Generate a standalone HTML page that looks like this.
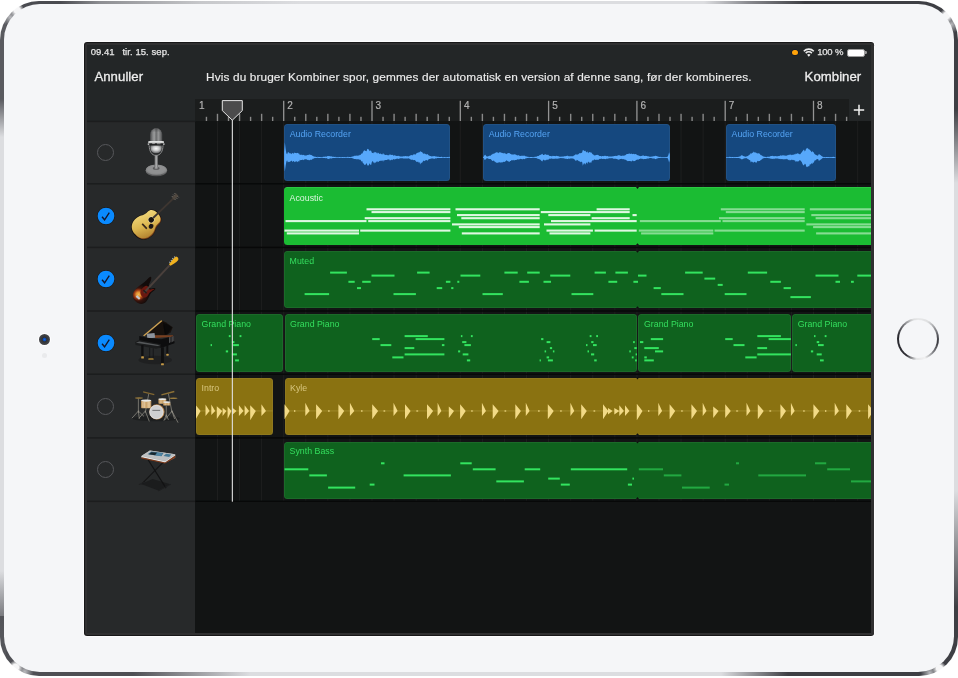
<!DOCTYPE html>
<html lang="da"><head><meta charset="utf-8"><title>GarageBand – Kombiner spor</title>
<style>
html,body{margin:0;padding:0;background:#fff;}
body{width:958px;height:678px;position:relative;overflow:hidden;font-family:"Liberation Sans",Arial,sans-serif;}
div,svg,span{position:absolute;box-sizing:border-box;}
.t{white-space:nowrap;line-height:1;}
.st{color:#e6e6e6;-webkit-text-stroke:0.25px #e6e6e6;}
.hd{color:#ededed;-webkit-text-stroke:0.3px #ededed;}
.lbl{font-size:8.8px;white-space:nowrap;line-height:1;}
.rg{border-radius:3.5px;box-shadow:inset 0 0 0 0.8px rgba(255,255,255,0.07);}
</style></head><body>

<div style="left:0.3px;top:0.7px;width:957.4px;height:675.8px;border-radius:39px;
background:
radial-gradient(ellipse 7px 7px at 17.2px 9.3px,#f6f6f7 0,#f6f6f7 45%,rgba(246,246,247,0) 100%),
radial-gradient(ellipse 7px 7px at 946.5px 14.6px,#f6f6f7 0,#f6f6f7 45%,rgba(246,246,247,0) 100%),
radial-gradient(ellipse 7px 7px at 15.6px 666.2px,#f6f6f7 0,#f6f6f7 45%,rgba(246,246,247,0) 100%),
radial-gradient(ellipse 7px 7px at 939.5px 667.4px,#f6f6f7 0,#f6f6f7 45%,rgba(246,246,247,0) 100%),
radial-gradient(ellipse 9px 9px at 10.2px 16.3px,rgba(205,206,209,0.85) 0,rgba(205,206,209,0) 100%),
radial-gradient(ellipse 9px 9px at 951.7px 23.3px,rgba(205,206,209,0.85) 0,rgba(205,206,209,0) 100%),
radial-gradient(ellipse 9px 9px at 24.7px 670.8px,rgba(205,206,209,0.85) 0,rgba(205,206,209,0) 100%),
radial-gradient(ellipse 9px 9px at 929.7px 671.8px,rgba(205,206,209,0.85) 0,rgba(205,206,209,0) 100%),
linear-gradient(to right,#4a4b50 0,#4a4b50 60px,#8d8e92 100px,#c6c7ca 200px,rgba(220,221,224,0) 300px,rgba(220,221,224,0) 704px,#8a8b90 748px,#3e3f44 805px,#3e3f44 100%) left top/100% 6px no-repeat,
linear-gradient(to right,#4e4f54 0,#4e4f54 133px,rgba(220,221,224,0) 250px,rgba(220,221,224,0) 721px,#3e3f44 788px,#3e3f44 100%) left bottom/100% 7px no-repeat,
linear-gradient(to bottom,#5a5b60 0,#5a5b60 98px,rgba(220,221,224,0) 136px,rgba(220,221,224,0) 570px,#55565b 632px,#55565b 100%) left top/6px 100% no-repeat,
linear-gradient(to bottom,#3e3f44 0,#3e3f44 108px,rgba(220,221,224,0) 182px,rgba(220,221,224,0) 490px,#3e3f44 606px,#3e3f44 100%) right top/7px 100% no-repeat,
radial-gradient(circle at 39px 39px,rgba(74,75,80,0) 0,rgba(74,75,80,0) 30px,#4a4b50 33px,#4a4b50 52px,rgba(74,75,80,0) 53px) left top/60px 60px no-repeat,
radial-gradient(circle at 21px 39px,rgba(62,63,68,0) 0,rgba(62,63,68,0) 30px,#3e3f44 33px,#3e3f44 52px,rgba(62,63,68,0) 53px) right top/60px 60px no-repeat,
radial-gradient(circle at 39px 21px,rgba(78,79,84,0) 0,rgba(78,79,84,0) 30px,#4e4f54 33px,#4e4f54 52px,rgba(78,79,84,0) 53px) left bottom/60px 60px no-repeat,
radial-gradient(circle at 21px 21px,rgba(62,63,68,0) 0,rgba(62,63,68,0) 30px,#3e3f44 33px,#3e3f44 52px,rgba(62,63,68,0) 53px) right bottom/60px 60px no-repeat,
#dcdde0;"></div>
<div style="left:4.3px;top:4.4px;width:949.9px;height:667.7px;border-radius:35.8px;background:#f5f6f8;"></div>
<div style="left:38px;top:332.7px;width:13px;height:13px;border-radius:50%;background:#fff;"></div>
<div style="left:39px;top:333.7px;width:11px;height:11px;border-radius:50%;background:radial-gradient(circle,#1268e0 0,#0a4ab8 1.3px,#303134 2.3px,#46474b 5.5px);"></div>
<div style="left:42px;top:352.6px;width:5px;height:5px;border-radius:50%;background:#e9eaec;"></div>
<div style="left:896.5px;top:317.8px;width:42.5px;height:42.5px;border-radius:50%;background:conic-gradient(from 0deg,#e8e9ea 0deg,#dedfe0 30deg,#55565c 80deg,#3a3a40 100deg,#7a7b80 130deg,#f0f0f1 160deg,#e4e5e6 185deg,#2e2e34 215deg,#2a2a30 280deg,#77787c 315deg,#dadbdc 345deg,#e8e9ea 360deg);"></div>
<div style="left:898.7px;top:320px;width:38.1px;height:38.1px;border-radius:50%;background:#f5f6f8;"></div>
<div style="left:82.6px;top:40.8px;width:792.8px;height:596.6px;border-radius:4px;background:#fcfcfd;"></div>
<div style="left:83.8px;top:42px;width:790.5px;height:594.3px;border-radius:3px;background:#171718;"></div>
<div style="left:84.8px;top:42.8px;width:789.3px;height:592.7px;border-radius:2.2px;background:#303031;"></div>
<div style="left:86.6px;top:45px;width:784.4px;height:588px;background:#232627;overflow:hidden;">
<div style="left:-86.6px;top:-45px;width:958px;height:678px;will-change:transform;">
<div style="left:86.6px;top:45px;width:784.4px;height:76px;background:#232627;"></div>
<div style="left:195.1px;top:99.3px;width:654.1px;height:21.7px;background:#1b1d1d;"></div>
<div style="left:195.2px;top:121px;width:675.8px;height:512px;background:#121414;"></div>
<div style="left:86.6px;top:121px;width:108.6px;height:512px;background:#27292a;"></div>
<svg width="958" height="678" style="left:0;top:0" viewBox="0 0 958 678"><g fill="#1e1f1f"><rect x="216.97" y="121" width="1" height="380.3"/><rect x="239.05" y="121" width="1" height="380.3"/><rect x="261.12" y="121" width="1" height="380.3"/><rect x="283.2" y="121" width="1" height="380.3"/><rect x="305.27" y="121" width="1" height="380.3"/><rect x="327.35" y="121" width="1" height="380.3"/><rect x="349.43" y="121" width="1" height="380.3"/><rect x="371.5" y="121" width="1" height="380.3"/><rect x="393.57" y="121" width="1" height="380.3"/><rect x="415.65" y="121" width="1" height="380.3"/><rect x="437.73" y="121" width="1" height="380.3"/><rect x="459.8" y="121" width="1" height="380.3"/><rect x="481.88" y="121" width="1" height="380.3"/><rect x="503.95" y="121" width="1" height="380.3"/><rect x="526.02" y="121" width="1" height="380.3"/><rect x="548.1" y="121" width="1" height="380.3"/><rect x="570.17" y="121" width="1" height="380.3"/><rect x="592.25" y="121" width="1" height="380.3"/><rect x="614.33" y="121" width="1" height="380.3"/><rect x="636.4" y="121" width="1" height="380.3"/><rect x="658.48" y="121" width="1" height="380.3"/><rect x="680.55" y="121" width="1" height="380.3"/><rect x="702.62" y="121" width="1" height="380.3"/><rect x="724.7" y="121" width="1" height="380.3"/><rect x="746.77" y="121" width="1" height="380.3"/><rect x="768.85" y="121" width="1" height="380.3"/><rect x="790.92" y="121" width="1" height="380.3"/><rect x="813" y="121" width="1" height="380.3"/><rect x="835.07" y="121" width="1" height="380.3"/><rect x="857.15" y="121" width="1" height="380.3"/></g>
<rect x="86.6" y="120.65" width="108.8" height="1.5" fill="#1c1d1e"/>
<rect x="86.6" y="183.05" width="108.8" height="1.5" fill="#1c1d1e"/>
<rect x="195.4" y="183.1" width="675.6" height="1.4" fill="#070808"/>
<rect x="86.6" y="246.65" width="108.8" height="1.5" fill="#1c1d1e"/>
<rect x="195.4" y="246.7" width="675.6" height="1.4" fill="#070808"/>
<rect x="86.6" y="310.25" width="108.8" height="1.5" fill="#1c1d1e"/>
<rect x="195.4" y="310.3" width="675.6" height="1.4" fill="#070808"/>
<rect x="86.6" y="373.45" width="108.8" height="1.5" fill="#1c1d1e"/>
<rect x="195.4" y="373.5" width="675.6" height="1.4" fill="#070808"/>
<rect x="86.6" y="437.15" width="108.8" height="1.5" fill="#1c1d1e"/>
<rect x="195.4" y="437.2" width="675.6" height="1.4" fill="#070808"/>
<rect x="86.6" y="500.55" width="108.8" height="1.5" fill="#1c1d1e"/>
<rect x="195.4" y="500.6" width="675.6" height="1.4" fill="#070808"/>
</svg>
<span class="t st" style="left:90.7px;top:47.4px;font-size:9.5px;letter-spacing:0px;">09.41</span>
<span class="t st" style="left:122.4px;top:47.4px;font-size:9.5px;letter-spacing:0.07px;">tir. 15. sep.</span>
<span class="t st" style="left:817.2px;top:47.4px;font-size:9.5px;letter-spacing:-0.19px;">100 %</span>
<div style="left:792.2px;top:49.6px;width:5.6px;height:5.6px;border-radius:50%;background:#ffa30a;box-shadow:0 0 0 0.6px #101428;"></div>
<svg style="left:803px;top:47.8px" width="11.6" height="9" viewBox="0 0 23.2 18"><g fill="none" stroke="#ededed" stroke-linecap="butt">
<path d="M1.6 6.4 A14.2 14.2 0 0 1 21.6 6.4" stroke-width="3.2"/>
<path d="M5.4 10.3 A8.8 8.8 0 0 1 17.8 10.3" stroke-width="3"/></g>
<path d="M11.6 17.4 L8.2 13.6 A5 5 0 0 1 15 13.6 Z" fill="#ededed"/></svg>
<div style="left:846.8px;top:48.8px;width:18px;height:8.2px;border-radius:2.2px;background:#fff;border:0.8px solid #9b9b9b;"></div>
<div style="left:865px;top:51.4px;width:1.6px;height:3px;border-radius:0 1.2px 1.2px 0;background:#9a9a9a;"></div>
<span class="t hd" style="left:94.4px;top:70.2px;font-size:13.2px;letter-spacing:0.05px;">Annuller</span>
<span class="t hd" id="msg" style="left:206.1px;top:71.5px;font-size:11.8px;letter-spacing:0.128px;-webkit-text-stroke:0.15px #ebebeb;">Hvis du bruger Kombiner spor, gemmes der automatisk en version af denne sang, før der kombineres.</span>
<span class="t hd" style="left:804.6px;top:70.1px;font-size:13.2px;letter-spacing:0.03px;">Kombiner</span>
<svg width="958" height="678" style="left:0;top:0" viewBox="0 0 958 678"><rect x="205.74" y="116.8" width="1.4" height="4.2" fill="#888888"/><rect x="216.78" y="113.8" width="1.4" height="7.2" fill="#888888"/><rect x="227.81" y="116.8" width="1.4" height="4.2" fill="#888888"/><rect x="238.85" y="113.8" width="1.4" height="7.2" fill="#888888"/><rect x="249.89" y="116.8" width="1.4" height="4.2" fill="#888888"/><rect x="260.93" y="113.8" width="1.4" height="7.2" fill="#888888"/><rect x="271.96" y="116.8" width="1.4" height="4.2" fill="#888888"/><rect x="283.05" y="100.8" width="1.3" height="20.2" fill="#949494"/><rect x="294.04" y="116.8" width="1.4" height="4.2" fill="#888888"/><rect x="305.07" y="113.8" width="1.4" height="7.2" fill="#888888"/><rect x="316.11" y="116.8" width="1.4" height="4.2" fill="#888888"/><rect x="327.15" y="113.8" width="1.4" height="7.2" fill="#888888"/><rect x="338.19" y="116.8" width="1.4" height="4.2" fill="#888888"/><rect x="349.22" y="113.8" width="1.4" height="7.2" fill="#888888"/><rect x="360.26" y="116.8" width="1.4" height="4.2" fill="#888888"/><rect x="371.35" y="100.8" width="1.3" height="20.2" fill="#949494"/><rect x="382.34" y="116.8" width="1.4" height="4.2" fill="#888888"/><rect x="393.38" y="113.8" width="1.4" height="7.2" fill="#888888"/><rect x="404.41" y="116.8" width="1.4" height="4.2" fill="#888888"/><rect x="415.45" y="113.8" width="1.4" height="7.2" fill="#888888"/><rect x="426.49" y="116.8" width="1.4" height="4.2" fill="#888888"/><rect x="437.53" y="113.8" width="1.4" height="7.2" fill="#888888"/><rect x="448.56" y="116.8" width="1.4" height="4.2" fill="#888888"/><rect x="459.65" y="100.8" width="1.3" height="20.2" fill="#949494"/><rect x="470.64" y="116.8" width="1.4" height="4.2" fill="#888888"/><rect x="481.67" y="113.8" width="1.4" height="7.2" fill="#888888"/><rect x="492.71" y="116.8" width="1.4" height="4.2" fill="#888888"/><rect x="503.75" y="113.8" width="1.4" height="7.2" fill="#888888"/><rect x="514.79" y="116.8" width="1.4" height="4.2" fill="#888888"/><rect x="525.82" y="113.8" width="1.4" height="7.2" fill="#888888"/><rect x="536.86" y="116.8" width="1.4" height="4.2" fill="#888888"/><rect x="547.95" y="100.8" width="1.3" height="20.2" fill="#949494"/><rect x="558.94" y="116.8" width="1.4" height="4.2" fill="#888888"/><rect x="569.98" y="113.8" width="1.4" height="7.2" fill="#888888"/><rect x="581.01" y="116.8" width="1.4" height="4.2" fill="#888888"/><rect x="592.05" y="113.8" width="1.4" height="7.2" fill="#888888"/><rect x="603.09" y="116.8" width="1.4" height="4.2" fill="#888888"/><rect x="614.12" y="113.8" width="1.4" height="7.2" fill="#888888"/><rect x="625.16" y="116.8" width="1.4" height="4.2" fill="#888888"/><rect x="636.25" y="100.8" width="1.3" height="20.2" fill="#949494"/><rect x="647.24" y="116.8" width="1.4" height="4.2" fill="#888888"/><rect x="658.27" y="113.8" width="1.4" height="7.2" fill="#888888"/><rect x="669.31" y="116.8" width="1.4" height="4.2" fill="#888888"/><rect x="680.35" y="113.8" width="1.4" height="7.2" fill="#888888"/><rect x="691.39" y="116.8" width="1.4" height="4.2" fill="#888888"/><rect x="702.42" y="113.8" width="1.4" height="7.2" fill="#888888"/><rect x="713.46" y="116.8" width="1.4" height="4.2" fill="#888888"/><rect x="724.55" y="100.8" width="1.3" height="20.2" fill="#949494"/><rect x="735.54" y="116.8" width="1.4" height="4.2" fill="#888888"/><rect x="746.57" y="113.8" width="1.4" height="7.2" fill="#888888"/><rect x="757.61" y="116.8" width="1.4" height="4.2" fill="#888888"/><rect x="768.65" y="113.8" width="1.4" height="7.2" fill="#888888"/><rect x="779.69" y="116.8" width="1.4" height="4.2" fill="#888888"/><rect x="790.72" y="113.8" width="1.4" height="7.2" fill="#888888"/><rect x="801.76" y="116.8" width="1.4" height="4.2" fill="#888888"/><rect x="812.85" y="100.8" width="1.3" height="20.2" fill="#949494"/><rect x="823.84" y="116.8" width="1.4" height="4.2" fill="#888888"/><rect x="834.88" y="113.8" width="1.4" height="7.2" fill="#888888"/><rect x="845.91" y="116.8" width="1.4" height="4.2" fill="#888888"/></svg>
<span class="t" style="left:199px;top:101.1px;font-size:10px;color:#b2b2b2;-webkit-text-stroke:0.2px #b2b2b2;">1</span>
<span class="t" style="left:287.3px;top:101.1px;font-size:10px;color:#b2b2b2;-webkit-text-stroke:0.2px #b2b2b2;">2</span>
<span class="t" style="left:375.6px;top:101.1px;font-size:10px;color:#b2b2b2;-webkit-text-stroke:0.2px #b2b2b2;">3</span>
<span class="t" style="left:463.9px;top:101.1px;font-size:10px;color:#b2b2b2;-webkit-text-stroke:0.2px #b2b2b2;">4</span>
<span class="t" style="left:552.2px;top:101.1px;font-size:10px;color:#b2b2b2;-webkit-text-stroke:0.2px #b2b2b2;">5</span>
<span class="t" style="left:640.5px;top:101.1px;font-size:10px;color:#b2b2b2;-webkit-text-stroke:0.2px #b2b2b2;">6</span>
<span class="t" style="left:728.8px;top:101.1px;font-size:10px;color:#b2b2b2;-webkit-text-stroke:0.2px #b2b2b2;">7</span>
<span class="t" style="left:817.1px;top:101.1px;font-size:10px;color:#b2b2b2;-webkit-text-stroke:0.2px #b2b2b2;">8</span>
<div style="left:849.2px;top:99.3px;width:21.8px;height:21.7px;background:#232627;"></div>
<svg style="left:853.2px;top:103.5px" width="12" height="12" viewBox="0 0 12 12"><path d="M6 0.8V11.2M0.8 6H11.2" stroke="#f2f2f2" stroke-width="1.5" fill="none"/></svg>
<div style="left:97.2px;top:143.8px;width:17px;height:17px;border-radius:50%;border:1.1px solid #56575a;"></div>
<svg style="left:126px;top:122px" width="60" height="60" viewBox="0 0 678 678">
<defs>
<linearGradient id="mcap" x1="0" x2="1" y1="0" y2="0"><stop offset="0" stop-color="#454648"/><stop offset="0.18" stop-color="#7b7c7d"/><stop offset="0.34" stop-color="#9c9d9e"/><stop offset="0.5" stop-color="#6a6b6c"/><stop offset="0.68" stop-color="#949596"/><stop offset="0.86" stop-color="#6e6f70"/><stop offset="1" stop-color="#434446"/></linearGradient>
<linearGradient id="mcapv" x1="0" x2="0" y1="0" y2="1"><stop offset="0" stop-color="#3a3b3d" stop-opacity="0.55"/><stop offset="0.3" stop-color="#3a3b3d" stop-opacity="0"/><stop offset="1" stop-color="#3a3b3d" stop-opacity="0"/></linearGradient>
<linearGradient id="mbase" x1="0" x2="0" y1="0" y2="1"><stop offset="0" stop-color="#8e8f90"/><stop offset="0.55" stop-color="#7a7b7c"/><stop offset="1" stop-color="#505152"/></linearGradient>
<radialGradient id="mlow" cx="0.5" cy="0.42" r="0.62"><stop offset="0" stop-color="#fafafa"/><stop offset="0.45" stop-color="#c9cacb"/><stop offset="1" stop-color="#58595b"/></radialGradient>
<linearGradient id="mstem" x1="0" x2="1"><stop offset="0" stop-color="#5c5d5e"/><stop offset="0.5" stop-color="#b4b5b6"/><stop offset="1" stop-color="#6c6d6e"/></linearGradient>
</defs>
<ellipse cx="343" cy="548" rx="122" ry="66" fill="url(#mbase)"/>
<ellipse cx="343" cy="538" rx="116" ry="58" fill="#8a8b8c"/>
<ellipse cx="343" cy="535" rx="100" ry="46" fill="#909192"/>
<ellipse cx="341" cy="522" rx="38" ry="17" fill="#595a5b"/>
<rect x="322" y="372" width="38" height="150" fill="url(#mstem)"/>
<ellipse cx="341" cy="520" rx="19" ry="8" fill="#9d9e9f"/>
<path d="M262 262 C262 330 290 378 340 378 C390 378 418 330 418 262" fill="none" stroke="#8c8d8e" stroke-width="11"/>
<path d="M272 225 V141 A69 69 0 0 1 410 141 V225 Z" fill="url(#mcap)"/>
<path d="M272 225 V141 A69 69 0 0 1 410 141 V225 Z" fill="url(#mcapv)"/>
<path d="M276 262 H404 V290 Q404 352 340 352 Q276 352 276 290Z" fill="url(#mlow)"/>
<rect x="262" y="238" width="156" height="26" fill="#1d1e1f"/>
<path d="M296 244 h30 M350 246 h40" stroke="#d8d8d8" stroke-width="7"/>
<rect x="250" y="216" width="180" height="24" rx="12" fill="#cfd0d0"/>
<rect x="270" y="219" width="140" height="8" rx="4" fill="#f1f1f1"/>
<circle cx="254" cy="250" r="10" fill="#bdbebf"/><circle cx="428" cy="250" r="10" fill="#bdbebf"/>
</svg>
<svg style="left:95.7px;top:205.7px" width="20" height="20" viewBox="-10 -10 20 20"><circle cx="0" cy="0" r="9" fill="#1b1817"/><circle cx="0" cy="0" r="8.35" fill="#0a8aff"/><path d="M-4 0.7 L-1.4 3.8 L3.3 -3.3" stroke="#14152a" stroke-width="1.35" fill="none" stroke-linejoin="miter"/></svg>
<svg style="left:126px;top:186px" width="60" height="60" viewBox="0 0 678 678">
<defs><linearGradient id="gbody" x1="0" x2="1" y1="0.2" y2="0.8"><stop offset="0" stop-color="#f3db7f"/><stop offset="0.55" stop-color="#dcb750"/><stop offset="1" stop-color="#b07f2e"/></linearGradient></defs>
<g transform="translate(285 382) rotate(46) scale(11.3)">
<rect x="-0.95" y="-30.5" width="1.9" height="28" fill="#3e3631"/>
<path d="M-1.9 -36.2 L1.9 -36.2 L1.5 -30.2 L-1.5 -30.2Z" fill="#4f473f"/>
<path d="M-2.8 -35.3h1M-2.8 -33.3h1M-2.8 -31.3h1M1.8 -35.3h1M1.8 -33.3h1M1.8 -31.3h1" stroke="#8e887e" stroke-width="0.9"/>
<path d="M0 -9.9 C5.7 -9.9 8.6 -7 8.6 -3.2 C8.6 -0.6 8.6 0.6 9.7 2.9 C14.2 9 13.2 22.7 0 22.7 C-13.2 22.7 -14.2 9 -9.7 2.9 C-8.6 0.6 -8.6 -0.6 -8.6 -3.2 C-8.6 -7 -5.7 -9.9 0 -9.9Z" fill="#16120f"/>
<path d="M1 -9 C6.2 -9 8.5 -6.6 8.5 -3 C8.5 -0.5 8.5 0.8 9.6 3.1 C13.7 9 12.8 21.6 0.8 21.8 C-2 18 12 6 1 -9Z" fill="#7e451c"/>
<path d="M-0.4 -9.2 C4.8 -9.2 7.5 -6.6 7.5 -3.1 C7.5 -0.6 7.5 0.7 8.6 3 C12.8 9 11.8 21.6 -0.4 21.6 C-12.6 21.6 -13.6 9 -9.4 3 C-8.3 0.7 -8.3 -0.6 -8.3 -3.1 C-8.3 -6.6 -5.6 -9.2 -0.4 -9.2Z" fill="url(#gbody)"/>
<circle cx="0" cy="0" r="3.3" fill="#e6d69e"/>
<circle cx="0" cy="0" r="2.7" fill="#17130f"/>
<path d="M4.7 1.8 C7.1 2.8 7.6 6 5.4 7.2 C3.2 7.8 1.6 5.2 2.7 3Z" fill="#1c1714"/>
<rect x="-3.4" y="8.5" width="6.8" height="1.7" rx="0.5" fill="#37281b"/>
<rect x="-0.95" y="-10" width="1.9" height="7.4" fill="#3e3631"/>
</g></svg>
<svg style="left:95.7px;top:269.3px" width="20" height="20" viewBox="-10 -10 20 20"><circle cx="0" cy="0" r="9" fill="#1b1817"/><circle cx="0" cy="0" r="8.35" fill="#0a8aff"/><path d="M-4 0.7 L-1.4 3.8 L3.3 -3.3" stroke="#14152a" stroke-width="1.35" fill="none" stroke-linejoin="miter"/></svg>
<svg style="left:126px;top:250px" width="60" height="60" viewBox="0 0 678 678">
<defs>
<radialGradient id="bsun" gradientUnits="userSpaceOnUse" cx="-2.8" cy="5.6" r="10.5"><stop offset="0" stop-color="#f2b956"/><stop offset="0.22" stop-color="#e08f30"/><stop offset="0.42" stop-color="#9a3715"/><stop offset="0.62" stop-color="#36130d"/><stop offset="1" stop-color="#120b0a"/></radialGradient>
</defs>
<g transform="translate(208 478) rotate(43) scale(11.3)">
<rect x="-0.95" y="-37.5" width="1.9" height="33" fill="#4a403c"/>
<path d="M-1.4 -47.8 C0.2 -49 2.6 -48.2 2.8 -46 C2.9 -43.4 1.9 -40.4 1.1 -37.2 L-1.1 -37.2 C-1.5 -40.6 -2.3 -45.2 -1.4 -47.8Z" fill="#f0b11f"/>
<path d="M-2.7 -46.4h1.2M-2.8 -44h1.2M-2.7 -41.6h1.2M-2.5 -39.3h1.2" stroke="#b4c2cf" stroke-width="1"/>
<path d="M-2.1 -8.6 C-2.6 -12 -4.2 -15.4 -5.6 -15.8 C-7.2 -15.4 -6.4 -11.6 -7 -7.6 C-7.6 -3.4 -9.2 1.2 -8.4 6 C-7.6 10.8 -3.6 12.9 0.4 12.7 C4.8 12.5 8 9.4 7.6 5 C7.2 1.4 5.6 -1.4 5.4 -4 C5.3 -6.2 6.4 -8.6 5.8 -10 C5 -10.9 3.2 -9.6 2.2 -6.8 Z" fill="url(#bsun)"/>
<path d="M-1.7 -6.6 C-2.9 -7 -3.8 -5.6 -4 -3.4 C-4.2 -0.8 -4 1.6 -2.8 3 C-1.4 4.6 1.8 5.2 3.8 3.8 C5.2 2.6 4.9 0.4 4.3 -2 C3.9 -4 5 -8.4 5.4 -9.2 C4.3 -8.8 3 -7.4 2.2 -5.4Z" fill="#6a1810"/>
<rect x="-0.95" y="-9.4" width="1.9" height="10" fill="#4a403c"/>
<rect x="-2.3" y="-1.6" width="4.6" height="1.5" fill="#241d1b"/>
<rect x="-3.4" y="7" width="4.6" height="2.2" rx="0.4" fill="#c3c7cc"/>
</g></svg>
<svg style="left:95.7px;top:332.7px" width="20" height="20" viewBox="-10 -10 20 20"><circle cx="0" cy="0" r="9" fill="#1b1817"/><circle cx="0" cy="0" r="8.35" fill="#0a8aff"/><path d="M-4 0.7 L-1.4 3.8 L3.3 -3.3" stroke="#14152a" stroke-width="1.35" fill="none" stroke-linejoin="miter"/></svg>
<svg style="left:126px;top:314px" width="60" height="60" viewBox="0 0 678 678">
<ellipse cx="330" cy="520" rx="190" ry="48" fill="#1a1b1c" opacity="0.6"/>
<path d="M405 74 L448 92 L528 150 L505 205 L462 236 L240 238 Z" fill="#17110d"/>
<path d="M418 100 L470 120 L520 152 L470 222 L440 232Z" fill="#0b0a0a"/>
<path d="M193 242 L398 72 L412 80 L206 252 Z" fill="#cfa252"/>
<path d="M428 128 L446 232" stroke="#060606" stroke-width="7"/>
<path d="M326 240 L532 240 L532 258 L326 270Z" fill="#7a3f1f"/>
<path d="M236 222 L322 216 L330 268 L240 276Z" fill="#8c939c"/>
<path d="M150 250 L240 268 L396 284 L548 250 L548 330 L420 376 L392 380 L150 320 Z" fill="#0d0d0e"/>
<path d="M492 262v64M508 258v62M524 254v60M540 250v58" stroke="#6a6b6d" stroke-width="8"/>
<path d="M104 316 L150 294 L394 342 L388 382 L340 392 L108 350Z" fill="#1b1c1d"/>
<path d="M112 324 L150 312 L386 352 L356 362Z" fill="#7d8083" opacity="0.6"/>
<rect x="172" y="352" width="26" height="140" fill="#0f0f10"/>
<rect x="396" y="376" width="32" height="196" fill="#0f0f10"/>
<rect x="456" y="352" width="22" height="110" fill="#0f0f10"/>
<path d="M268 380 v128 h40 v-120" stroke="#131314" stroke-width="9" fill="none"/>
<rect x="172" y="478" width="30" height="24" rx="6" fill="#c59a47"/>
<rect x="396" y="556" width="32" height="24" rx="6" fill="#c59a47"/>
<rect x="456" y="450" width="26" height="22" rx="6" fill="#c59a47"/>
<rect x="252" y="500" width="60" height="18" rx="5" fill="#a68236"/>
</svg>
<div style="left:97.2px;top:397.65px;width:17px;height:17px;border-radius:50%;border:1.1px solid #56575a;"></div>
<svg style="left:126px;top:377px" width="60" height="60" viewBox="0 0 678 678">
<defs><linearGradient id="dwood" x1="0" x2="1"><stop offset="0" stop-color="#b48a54"/><stop offset="0.3" stop-color="#dcba88"/><stop offset="0.55" stop-color="#c9a26a"/><stop offset="0.8" stop-color="#dfbe8c"/><stop offset="1" stop-color="#a47a46"/></linearGradient></defs>
<ellipse cx="340" cy="470" rx="270" ry="30" fill="#161718" opacity="0.55"/>
<g stroke="#9d9a8f" stroke-width="7.5" fill="none" stroke-linecap="round">
<path d="M140 246 V400 M140 385 L70 462 M140 385 L200 442 M140 385 L150 470"/>
<path d="M256 196 L218 400 M218 385 L150 462 M218 385 L262 498"/>
<path d="M480 192 L520 400 M520 385 L440 482 M520 385 L586 512 M520 385 L548 470"/>
<path d="M455 330 V450 M455 430 L430 490 M455 430 L478 480"/>
</g>
<path d="M194 160 L322 192 L318 206 L192 176Z" fill="#806631"/>
<path d="M398 194 L544 156 L548 172 L402 208Z" fill="#8c7136"/>
<ellipse cx="146" cy="238" rx="46" ry="9" fill="#97793c"/>
<ellipse cx="536" cy="240" rx="46" ry="9" fill="#987b3e"/>
<rect x="170" y="266" width="116" height="88" rx="8" fill="url(#dwood)"/>
<ellipse cx="228" cy="266" rx="58" ry="13" fill="#e9e9e6"/>
<path d="M186 282v62M206 284v64M250 284v64M270 282v62" stroke="#f2e6cc" stroke-width="5" opacity="0.8"/>
<rect x="366" y="250" width="90" height="52" rx="8" fill="url(#dwood)"/>
<ellipse cx="411" cy="250" rx="45" ry="11" fill="#ecece9"/>
<rect x="420" y="284" width="80" height="38" rx="6" fill="url(#dwood)"/>
<ellipse cx="460" cy="284" rx="40" ry="9" fill="#e4e4e1"/>
<circle cx="350" cy="394" r="86" fill="#b48248"/>
<circle cx="344" cy="396" r="79" fill="#cfd0d1"/>
<circle cx="344" cy="396" r="76" fill="none" stroke="#eeeeef" stroke-width="6"/>
<path d="M298 377 h88" stroke="#4a4a4b" stroke-width="8"/>
</svg>
<div style="left:97.2px;top:461.2px;width:17px;height:17px;border-radius:50%;border:1.1px solid #56575a;"></div>
<svg style="left:126px;top:441px" width="60" height="60" viewBox="0 0 678 678">
<path d="M172 486 L300 428 L502 490 L372 562Z" fill="#1b1c1d"/>
<path d="M250 212 L452 532" stroke="#121213" stroke-width="13"/>
<path d="M424 236 L176 486" stroke="#141415" stroke-width="12"/>
<path d="M150 492 L200 470 M368 562 L502 490" stroke="#1f2021" stroke-width="12" stroke-linecap="round"/>
<path d="M175 170 L270 108 L556 150 L556 188 L440 250 L175 190Z" fill="#9fa3a6"/>
<path d="M175 168 L270 108 L556 150 L442 226Z" fill="#bcbfc1"/>
<path d="M244 150 L286 118 L424 136 L400 172Z" fill="#3b6d8b"/>
<path d="M258 150 L288 126 L352 134 L330 160Z" fill="#16262e"/>
<path d="M330 160 L352 134 L414 142 L396 170Z" fill="#4f86a5"/>
<path d="M424 170 L452 144 L512 152 L488 182Z" fill="#457894"/>
<path d="M175 170 L442 228 L556 152 L556 164 L442 242 L175 184Z" fill="#e2e3e3"/>
<path d="M175 184 L442 242 L556 164 L556 190 L440 254 L175 198Z" fill="#7c3818"/>
</svg>
<div class="rg" style="left:284.1px;top:123.8px;width:166px;height:57px;background:#15487f;"></div>
<span class="lbl" style="left:289.7px;top:129.75px;color:#55a4f4;">Audio Recorder</span>
<div class="rg" style="left:483.1px;top:123.8px;width:187.1px;height:57px;background:#15487f;"></div>
<span class="lbl" style="left:488.7px;top:129.75px;color:#55a4f4;">Audio Recorder</span>
<div class="rg" style="left:726px;top:123.8px;width:109.5px;height:57px;background:#15487f;"></div>
<span class="lbl" style="left:731.6px;top:129.75px;color:#55a4f4;">Audio Recorder</span>
<div class="rg" style="left:284px;top:187.3px;width:589px;height:57.6px;background:#1bbc33;border-radius:3.5px 0 0 3.5px;box-shadow:inset 0 0.8px 0 0 rgba(120,255,140,0.25);"></div>
<span class="lbl" style="left:289.6px;top:193.8px;color:#dcf6df;">Acoustic</span>
<div class="rg" style="left:284px;top:251.1px;width:589px;height:56.8px;background:#0f621e;border-radius:3.5px 0 0 3.5px;"></div>
<span class="lbl" style="left:289.6px;top:257.2px;color:#34df5e;">Muted</span>
<div class="rg" style="left:196px;top:314.4px;width:87.2px;height:57.4px;background:#0f621e;"></div>
<span class="lbl" style="left:201.6px;top:320.2px;color:#34df5e;">Grand Piano</span>
<div class="rg" style="left:284.5px;top:314.4px;width:352.8px;height:57.4px;background:#0f621e;"></div>
<span class="lbl" style="left:290.1px;top:320.2px;color:#34df5e;">Grand Piano</span>
<div class="rg" style="left:638.4px;top:314.4px;width:152.5px;height:57.4px;background:#0f621e;"></div>
<span class="lbl" style="left:644px;top:320.2px;color:#34df5e;">Grand Piano</span>
<div class="rg" style="left:792.1px;top:314.4px;width:80.9px;height:57.4px;background:#0f621e;border-radius:3.5px 0 0 3.5px;"></div>
<span class="lbl" style="left:797.7px;top:320.2px;color:#34df5e;">Grand Piano</span>
<div class="rg" style="left:196px;top:377.8px;width:76.7px;height:57px;background:#8a7211;"></div>
<span class="lbl" style="left:201.6px;top:384.4px;color:#d8c67e;">Intro</span>
<div class="rg" style="left:284.5px;top:377.8px;width:588.5px;height:57px;background:#8a7211;border-radius:3.5px 0 0 3.5px;"></div>
<span class="lbl" style="left:290.1px;top:384.4px;color:#d8c67e;">Kyle</span>
<div class="rg" style="left:284px;top:441.9px;width:589px;height:56.8px;background:#0f621e;border-radius:3.5px 0 0 3.5px;"></div>
<span class="lbl" style="left:289.6px;top:447.3px;color:#34df5e;">Synth Bass</span>
<svg width="958" height="678" style="left:0;top:0" viewBox="0 0 958 678"><defs><clipPath id="cc"><rect x="0" y="0" width="871" height="678"/></clipPath></defs><g clip-path="url(#cc)">
<path fill="#57a8fb" d="M284.1 151.9 L284.85 142.32 L285.6 148.69 L286.35 153.37 L287.1 154.13 L287.85 152.21 L288.6 152.14 L289.35 153.02 L290.1 153.8 L290.85 153.04 L291.6 154.34 L292.35 152.64 L293.1 153.47 L293.85 153.51 L294.6 152.51 L295.35 152.89 L296.1 153.05 L296.85 153.21 L297.6 152.7 L298.35 153.54 L299.1 153.58 L299.85 155.02 L300.6 154.66 L301.35 154.64 L302.1 154.83 L302.85 155.34 L303.6 154.86 L304.35 155.25 L305.1 155.71 L305.85 155.13 L306.6 155.62 L307.35 155.04 L308.1 155.1 L308.85 154.72 L309.6 154.56 L310.35 154.65 L311.1 155.37 L311.85 154.95 L312.6 155.9 L313.35 156.26 L314.1 156.49 L314.85 156.68 L315.6 156.87 L316.35 156.91 L317.1 156.98 L317.85 156.86 L318.6 156.9 L319.35 156.88 L320.1 156.89 L320.85 156.93 L321.6 157.01 L322.35 156.89 L323.1 156.86 L323.85 156.84 L324.6 156.71 L325.35 156.58 L326.1 156.67 L326.85 156.5 L327.6 156.09 L328.35 156.03 L329.1 156.27 L329.85 156.09 L330.6 156.48 L331.35 156.26 L332.1 156.64 L332.85 156.67 L333.6 156.82 L334.35 156.89 L335.1 156.82 L335.85 156.94 L336.6 157.02 L337.35 156.95 L338.1 157.02 L338.85 156.95 L339.6 156.93 L340.35 157.04 L341.1 157.01 L341.85 157.01 L342.6 156.92 L343.35 157 L344.1 156.9 L344.85 157 L345.6 156.97 L346.35 156.98 L347.1 157.03 L347.85 156.86 L348.6 156.98 L349.35 156.98 L350.1 156.88 L350.85 156.94 L351.6 156.73 L352.35 156.59 L353.1 156.45 L353.85 156.04 L354.6 155.8 L355.35 155.76 L356.1 155.73 L356.85 155.5 L357.6 155.75 L358.35 155.59 L359.1 155.47 L359.85 154.7 L360.6 154.99 L361.35 153.46 L362.1 153.69 L362.85 152.38 L363.6 151.03 L364.35 150.34 L365.1 150.73 L365.85 151 L366.6 151.22 L367.35 148.71 L368.1 149.32 L368.85 149.43 L369.6 151.24 L370.35 150.39 L371.1 150.7 L371.85 152.85 L372.6 153.11 L373.35 153.25 L374.1 151.84 L374.85 152.73 L375.6 151.92 L376.35 152.5 L377.1 153.66 L377.85 152.59 L378.6 152.9 L379.35 154.11 L380.1 153.43 L380.85 153.63 L381.6 154.35 L382.35 154.41 L383.1 153.06 L383.85 154.47 L384.6 154.56 L385.35 155.03 L386.1 155.02 L386.85 154.7 L387.6 155.32 L388.35 155.35 L389.1 155.27 L389.85 154.16 L390.6 154.63 L391.35 155.12 L392.1 154.84 L392.85 155.09 L393.6 155.82 L394.35 155.36 L395.1 155.57 L395.85 155.87 L396.6 155.88 L397.35 156.11 L398.1 155.74 L398.85 156.12 L399.6 156.18 L400.35 156.56 L401.1 156.61 L401.85 156.38 L402.6 156.48 L403.35 156.23 L404.1 156.25 L404.85 156.18 L405.6 156.03 L406.35 156.36 L407.1 156.37 L407.85 156.35 L408.6 156.46 L409.35 155.98 L410.1 155.56 L410.85 155.29 L411.6 154.92 L412.35 155.38 L413.1 154.48 L413.85 154.43 L414.6 154.27 L415.35 154.67 L416.1 153.65 L416.85 153.03 L417.6 152.67 L418.35 152.64 L419.1 151.69 L419.85 152.49 L420.6 150.98 L421.35 152.1 L422.1 151.89 L422.85 153.17 L423.6 153.76 L424.35 153.44 L425.1 153.73 L425.85 154.14 L426.6 154.58 L427.35 153.95 L428.1 154.86 L428.85 155.48 L429.6 155.71 L430.35 156.01 L431.1 156.19 L431.85 156.43 L432.6 156.26 L433.35 156.21 L434.1 155.93 L434.85 156.3 L435.6 156.52 L436.35 156.49 L437.1 156.76 L437.85 156.69 L438.6 156.82 L439.35 156.94 L440.1 156.89 L440.85 156.88 L441.6 156.87 L442.35 157.01 L443.1 157 L443.85 156.9 L444.6 156.92 L445.35 156.98 L446.1 157.01 L446.85 157.03 L447.6 156.89 L448.35 156.99 L449.1 156.87 L449.85 156.9 L449.85 157.95 L449.1 157.88 L448.35 157.86 L447.6 157.92 L446.85 157.82 L446.1 157.82 L445.35 157.82 L444.6 157.91 L443.85 157.83 L443.1 157.81 L442.35 157.76 L441.6 157.95 L440.85 157.98 L440.1 157.92 L439.35 157.89 L438.6 158.04 L437.85 158.07 L437.1 158.09 L436.35 158.41 L435.6 158.17 L434.85 158.54 L434.1 159.05 L433.35 158.61 L432.6 158.45 L431.85 158.37 L431.1 158.69 L430.35 158.76 L429.6 159.09 L428.85 159.03 L428.1 160.02 L427.35 160.75 L426.6 160.02 L425.85 160.31 L425.1 160.59 L424.35 161.26 L423.6 160.52 L422.85 161.42 L422.1 162.84 L421.35 162.77 L420.6 164.42 L419.85 161.67 L419.1 163.4 L418.35 161.67 L417.6 161.67 L416.85 162.1 L416.1 161.6 L415.35 160.45 L414.6 160.09 L413.85 160.05 L413.1 160.14 L412.35 159.43 L411.6 159.74 L410.85 159.81 L410.1 159.06 L409.35 158.64 L408.6 158.34 L407.85 158.56 L407.1 158.52 L406.35 158.48 L405.6 158.6 L404.85 158.46 L404.1 158.38 L403.35 158.61 L402.6 158.33 L401.85 158.36 L401.1 158.27 L400.35 158.2 L399.6 158.58 L398.85 158.74 L398.1 159.03 L397.35 158.6 L396.6 158.81 L395.85 158.95 L395.1 159.32 L394.35 159.47 L393.6 159.03 L392.85 159.44 L392.1 160.32 L391.35 159.38 L390.6 160.13 L389.85 160.44 L389.1 159.22 L388.35 159.54 L387.6 159.47 L386.85 159.94 L386.1 160.12 L385.35 160.06 L384.6 160.45 L383.85 160.03 L383.1 161.63 L382.35 160.16 L381.6 160.8 L380.85 160.71 L380.1 160.79 L379.35 160.97 L378.6 161.84 L377.85 162.3 L377.1 160.88 L376.35 161.89 L375.6 162.68 L374.85 162.23 L374.1 163.51 L373.35 162.01 L372.6 161.1 L371.85 162.02 L371.1 164.88 L370.35 164.63 L369.6 163.18 L368.85 165.05 L368.1 165.72 L367.35 165.35 L366.6 162.97 L365.85 164.23 L365.1 165.05 L364.35 164.86 L363.6 163.47 L362.85 162.93 L362.1 160.79 L361.35 161.68 L360.6 159.69 L359.85 159.71 L359.1 159.54 L358.35 159.21 L357.6 159.13 L356.85 159.13 L356.1 159.16 L355.35 158.97 L354.6 159 L353.85 158.96 L353.1 158.25 L352.35 158.32 L351.6 157.98 L350.85 157.79 L350.1 157.91 L349.35 157.88 L348.6 157.86 L347.85 158 L347.1 157.75 L346.35 157.83 L345.6 157.84 L344.85 157.82 L344.1 157.91 L343.35 157.86 L342.6 157.89 L341.85 157.81 L341.1 157.81 L340.35 157.71 L339.6 157.91 L338.85 157.81 L338.1 157.83 L337.35 157.8 L336.6 157.77 L335.85 157.86 L335.1 157.97 L334.35 157.88 L333.6 157.99 L332.85 158.04 L332.1 158.19 L331.35 158.45 L330.6 158.19 L329.85 158.54 L329.1 158.64 L328.35 158.9 L327.6 158.83 L326.85 158.32 L326.1 158.08 L325.35 158.21 L324.6 158.11 L323.85 157.93 L323.1 157.93 L322.35 157.86 L321.6 157.83 L320.85 157.86 L320.1 157.91 L319.35 157.96 L318.6 157.95 L317.85 157.86 L317.1 157.82 L316.35 157.89 L315.6 158 L314.85 158.06 L314.1 158.32 L313.35 158.7 L312.6 158.75 L311.85 159.92 L311.1 159.56 L310.35 159.77 L309.6 160.15 L308.85 160.3 L308.1 159.65 L307.35 159.89 L306.6 159.21 L305.85 159.61 L305.1 158.96 L304.35 159.61 L303.6 160.2 L302.85 159.51 L302.1 160.1 L301.35 160.1 L300.6 160.32 L299.85 159.66 L299.1 161.63 L298.35 160.9 L297.6 162.18 L296.85 160.99 L296.1 161.69 L295.35 161.55 L294.6 162.28 L293.85 160.96 L293.1 161.24 L292.35 161.99 L291.6 160.5 L290.85 161.15 L290.1 161.48 L289.35 162.07 L288.6 161.87 L287.85 162.49 L287.1 160.21 L286.35 161.78 L285.6 165.98 L284.85 171.38 L284.1 163.47Z"/>
<path fill="#57a8fb" d="M483.1 156.81 L483.85 156.67 L484.6 155.07 L485.35 154.82 L486.1 156.01 L486.85 156.58 L487.6 156.57 L488.35 156.24 L489.1 155.81 L489.85 155.73 L490.6 155.66 L491.35 154.82 L492.1 154.44 L492.85 153.79 L493.6 153.86 L494.35 153.45 L495.1 152.97 L495.85 152.62 L496.6 152.25 L497.35 152.58 L498.1 152.55 L498.85 153.23 L499.6 152.05 L500.35 152.3 L501.1 152.78 L501.85 152.76 L502.6 152.89 L503.35 153.39 L504.1 152.81 L504.85 153.61 L505.6 153.56 L506.35 154.31 L507.1 153.57 L507.85 153.16 L508.6 153.07 L509.35 153.04 L510.1 153.85 L510.85 153.89 L511.6 154.57 L512.35 154.55 L513.1 154.57 L513.85 154.42 L514.6 154.33 L515.35 154.5 L516.1 154.64 L516.85 155.2 L517.6 155.49 L518.35 155.07 L519.1 155.77 L519.85 155.71 L520.6 155.97 L521.35 155.77 L522.1 155.73 L522.85 155.73 L523.6 155.81 L524.35 155.44 L525.1 156.16 L525.85 156.35 L526.6 156.4 L527.35 156.87 L528.1 156.83 L528.85 156.99 L529.6 157.02 L530.35 156.9 L531.1 156.88 L531.85 156.88 L532.6 156.95 L533.35 156.92 L534.1 157.01 L534.85 156.84 L535.6 156.84 L536.35 156.73 L537.1 156.33 L537.85 156.06 L538.6 155.95 L539.35 155.36 L540.1 155.05 L540.85 154.72 L541.6 154.16 L542.35 153.83 L543.1 154.9 L543.85 155.01 L544.6 154.57 L545.35 154.31 L546.1 154.5 L546.85 155.02 L547.6 154.77 L548.35 154.86 L549.1 155.81 L549.85 156.04 L550.6 156.09 L551.35 156.28 L552.1 156.31 L552.85 155.86 L553.6 156.06 L554.35 155.92 L555.1 156 L555.85 156.15 L556.6 155.87 L557.35 156.12 L558.1 156.19 L558.85 156.16 L559.6 156.65 L560.35 156.68 L561.1 156.48 L561.85 156.73 L562.6 156.54 L563.35 156.5 L564.1 156.43 L564.85 156.12 L565.6 156.15 L566.35 155.98 L567.1 155.82 L567.85 155.63 L568.6 156.13 L569.35 156.29 L570.1 156.16 L570.85 156.28 L571.6 156.35 L572.35 156.24 L573.1 156.18 L573.85 155.56 L574.6 155.32 L575.35 154.5 L576.1 154.18 L576.85 154.72 L577.6 154.4 L578.35 154.34 L579.1 153.4 L579.85 153.02 L580.6 153.16 L581.35 152.94 L582.1 152.56 L582.85 150.01 L583.6 150.31 L584.35 151.2 L585.1 150.39 L585.85 151.39 L586.6 152.61 L587.35 151.25 L588.1 153.31 L588.85 152.28 L589.6 151.99 L590.35 152.43 L591.1 152.17 L591.85 153.37 L592.6 154.17 L593.35 154.59 L594.1 155.42 L594.85 155.35 L595.6 155.15 L596.35 155.07 L597.1 154.81 L597.85 155.1 L598.6 155.31 L599.35 155.95 L600.1 156.05 L600.85 155.89 L601.6 156.41 L602.35 156.03 L603.1 155.99 L603.85 156.27 L604.6 155.82 L605.35 155.71 L606.1 156.21 L606.85 155.91 L607.6 156.03 L608.35 156.4 L609.1 156.51 L609.85 156.47 L610.6 156.47 L611.35 156.6 L612.1 156.62 L612.85 156.37 L613.6 156.15 L614.35 156.07 L615.1 155.98 L615.85 155.71 L616.6 155.88 L617.35 155.72 L618.1 155.2 L618.85 155.3 L619.6 155.22 L620.35 155.83 L621.1 155.7 L621.85 156.06 L622.6 155.42 L623.35 155.63 L624.1 155.53 L624.85 155.42 L625.6 154.97 L626.35 154.18 L627.1 153.93 L627.85 153.9 L628.6 153.73 L629.35 153.4 L630.1 153.72 L630.85 153.91 L631.6 153.56 L632.35 154.16 L633.1 153.81 L633.85 153.93 L634.6 154.15 L635.35 153.91 L636.1 154.36 L636.85 154.69 L637.6 155.23 L638.35 155.31 L639.1 155.88 L639.85 155.68 L640.6 156.15 L641.35 156.04 L642.1 155.86 L642.85 155.55 L643.6 155.56 L644.35 155.89 L645.1 156.02 L645.85 155.84 L646.6 156.12 L647.35 156.27 L648.1 156.37 L648.85 156.54 L649.6 156.75 L650.35 156.68 L651.1 156.72 L651.85 156.44 L652.6 156.43 L653.35 156.37 L654.1 156.25 L654.85 156.04 L655.6 155.74 L656.35 155.97 L657.1 156.29 L657.85 156.4 L658.6 156.75 L659.35 156.9 L660.1 156.8 L660.85 156.99 L661.6 156.99 L662.35 156.99 L663.1 156.99 L663.85 156.93 L664.6 156.97 L665.35 157.03 L666.1 156.89 L666.85 156.9 L667.6 156.81 L668.35 155.23 L669.1 152.23 L669.85 154.62 L669.85 160.09 L669.1 162.41 L668.35 159.74 L667.6 158.05 L666.85 157.85 L666.1 157.9 L665.35 157.73 L664.6 157.86 L663.85 157.85 L663.1 157.77 L662.35 157.79 L661.6 157.8 L660.85 157.77 L660.1 157.93 L659.35 157.88 L658.6 158.07 L657.85 158.37 L657.1 158.42 L656.35 158.8 L655.6 159.25 L654.85 158.7 L654.1 158.39 L653.35 158.57 L652.6 158.49 L651.85 158.32 L651.1 158.02 L650.35 158.1 L649.6 158.07 L648.85 158.39 L648.1 158.56 L647.35 158.62 L646.6 158.85 L645.85 158.97 L645.1 158.94 L644.35 159.06 L643.6 159.32 L642.85 159.1 L642.1 158.87 L641.35 158.83 L640.6 158.55 L639.85 159.03 L639.1 158.99 L638.35 159.76 L637.6 159.44 L636.85 159.83 L636.1 160.06 L635.35 160.75 L634.6 160.96 L633.85 161.34 L633.1 160.71 L632.35 160.38 L631.6 161.39 L630.85 161.25 L630.1 160.96 L629.35 160.91 L628.6 160.96 L627.85 161.21 L627.1 160.66 L626.35 160.22 L625.6 159.86 L624.85 159.47 L624.1 159.47 L623.35 159.11 L622.6 159.3 L621.85 158.77 L621.1 159 L620.35 158.91 L619.6 159.34 L618.85 159.68 L618.1 159.54 L617.35 159.21 L616.6 159.04 L615.85 158.85 L615.1 158.72 L614.35 158.8 L613.6 158.74 L612.85 158.54 L612.1 158.07 L611.35 158.31 L610.6 158.32 L609.85 158.26 L609.1 158.32 L608.35 158.49 L607.6 158.8 L606.85 158.75 L606.1 158.7 L605.35 159.28 L604.6 159.03 L603.85 158.68 L603.1 158.95 L602.35 158.93 L601.6 158.38 L600.85 158.97 L600.1 158.82 L599.35 158.9 L598.6 159.71 L597.85 159.81 L597.1 159.86 L596.35 159.71 L595.6 159.94 L594.85 159.39 L594.1 159.38 L593.35 160.53 L592.6 160.17 L591.85 161 L591.1 163.08 L590.35 162.23 L589.6 162.74 L588.85 162.15 L588.1 161.51 L587.35 164.02 L586.6 162.25 L585.85 163.46 L585.1 164.79 L584.35 163.1 L583.6 163.7 L582.85 165.87 L582.1 161.64 L581.35 161.74 L580.6 162.27 L579.85 161.25 L579.1 161.51 L578.35 160.63 L577.6 160.19 L576.85 159.86 L576.1 160.94 L575.35 160.56 L574.6 159.47 L573.85 159.11 L573.1 158.6 L572.35 158.56 L571.6 158.54 L570.85 158.36 L570.1 158.81 L569.35 158.63 L568.6 158.53 L567.85 159.12 L567.1 158.96 L566.35 158.85 L565.6 158.75 L564.85 158.85 L564.1 158.31 L563.35 158.32 L562.6 158.26 L561.85 158.06 L561.1 158.37 L560.35 158.07 L559.6 158.19 L558.85 158.59 L558.1 158.53 L557.35 158.84 L556.6 158.87 L555.85 158.49 L555.1 158.81 L554.35 158.68 L553.6 158.74 L552.85 159.04 L552.1 158.62 L551.35 158.57 L550.6 158.7 L549.85 158.65 L549.1 158.83 L548.35 159.74 L547.6 159.72 L546.85 159.45 L546.1 160.32 L545.35 160.27 L544.6 160.48 L543.85 159.86 L543.1 159.86 L542.35 161.5 L541.6 161.11 L540.85 160.18 L540.1 159.51 L539.35 159.17 L538.6 158.88 L537.85 158.71 L537.1 158.4 L536.35 158 L535.6 157.94 L534.85 157.9 L534.1 157.78 L533.35 157.86 L532.6 157.81 L531.85 157.95 L531.1 157.96 L530.35 157.94 L529.6 157.77 L528.85 157.79 L528.1 158.01 L527.35 157.91 L526.6 158.3 L525.85 158.31 L525.1 158.72 L524.35 159.16 L523.6 158.87 L522.85 159.18 L522.1 159.3 L521.35 159.11 L520.6 158.77 L519.85 159.2 L519.1 159.22 L518.35 159.55 L517.6 159.33 L516.85 159.85 L516.1 159.97 L515.35 159.92 L514.6 160.19 L513.85 160.58 L513.1 159.87 L512.35 160.62 L511.6 159.98 L510.85 161.01 L510.1 160.97 L509.35 162.03 L508.6 161.48 L507.85 161.35 L507.1 160.84 L506.35 160.33 L505.6 161.22 L504.85 161.66 L504.1 161.93 L503.35 161.87 L502.6 162.36 L501.85 162.64 L501.1 162.06 L500.35 162.83 L499.6 162.21 L498.85 162.17 L498.1 162.67 L497.35 162.81 L496.6 163.01 L495.85 161.73 L495.1 162.49 L494.35 160.92 L493.6 160.44 L492.85 161.07 L492.1 160.71 L491.35 159.84 L490.6 158.9 L489.85 158.96 L489.1 159.01 L488.35 158.73 L487.6 158.2 L486.85 158.14 L486.1 158.84 L485.35 159.83 L484.6 159.89 L483.85 158.04 L483.1 158.07Z"/>
<path fill="#57a8fb" d="M726 157 L726.75 156.97 L727.5 156.93 L728.25 157.04 L729 156.99 L729.75 156.86 L730.5 156.89 L731.25 156.92 L732 156.93 L732.75 156.95 L733.5 156.92 L734.25 156.9 L735 156.99 L735.75 156.88 L736.5 156.91 L737.25 156.91 L738 156.94 L738.75 156.86 L739.5 156.52 L740.25 156.42 L741 155.48 L741.75 155.37 L742.5 155.53 L743.25 156.01 L744 156.33 L744.75 156.6 L745.5 156.65 L746.25 156.62 L747 156.33 L747.75 155.92 L748.5 155.5 L749.25 154.73 L750 154.59 L750.75 153.06 L751.5 153.68 L752.25 152.66 L753 152.71 L753.75 151.61 L754.5 152.4 L755.25 152.54 L756 152.5 L756.75 153.21 L757.5 153.48 L758.25 152.95 L759 153.77 L759.75 153.51 L760.5 154.88 L761.25 155.24 L762 155.48 L762.75 156.28 L763.5 156.56 L764.25 156.78 L765 156.78 L765.75 156.91 L766.5 156.93 L767.25 156.71 L768 156.73 L768.75 156.65 L769.5 156.66 L770.25 156.27 L771 156.11 L771.75 155.94 L772.5 155.84 L773.25 156.22 L774 155.88 L774.75 156.2 L775.5 156.12 L776.25 156.31 L777 156.33 L777.75 156.31 L778.5 155.96 L779.25 155.89 L780 155.86 L780.75 155.33 L781.5 155.69 L782.25 155.25 L783 155.58 L783.75 155.29 L784.5 155.38 L785.25 155.8 L786 155.39 L786.75 155.75 L787.5 155.34 L788.25 154.87 L789 155.26 L789.75 154.49 L790.5 154.43 L791.25 155.14 L792 154.45 L792.75 154.9 L793.5 154.71 L794.25 153.93 L795 154.83 L795.75 153.44 L796.5 153.92 L797.25 153.18 L798 153.53 L798.75 153.76 L799.5 154.29 L800.25 154.21 L801 153.25 L801.75 152.19 L802.5 151.19 L803.25 150.32 L804 149.62 L804.75 151.5 L805.5 150.5 L806.25 148.31 L807 148.71 L807.75 147.82 L808.5 149.33 L809.25 149.13 L810 150.37 L810.75 150.77 L811.5 152.36 L812.25 151.16 L813 151.68 L813.75 152.43 L814.5 154.02 L815.25 154.42 L816 155.01 L816.75 155.18 L817.5 155.71 L818.25 155.26 L819 153.85 L819.75 154.87 L820.5 155.02 L821.25 155.68 L822 156.19 L822.75 156.75 L823.5 156.94 L824.25 156.88 L825 157.02 L825.75 156.97 L826.5 156.9 L827.25 156.9 L828 156.96 L828.75 156.95 L829.5 156.96 L830.25 156.96 L831 156.94 L831.75 157.03 L832.5 156.96 L833.25 156.87 L834 156.88 L834.75 156.99 L835.5 157.02 L835.5 157.82 L834.75 157.8 L834 157.97 L833.25 157.91 L832.5 157.89 L831.75 157.76 L831 157.88 L830.25 157.81 L829.5 157.86 L828.75 157.88 L828 157.82 L827.25 157.92 L826.5 157.88 L825.75 157.84 L825 157.74 L824.25 157.9 L823.5 157.87 L822.75 158.02 L822 158.56 L821.25 159.2 L820.5 159.65 L819.75 159.93 L819 161.33 L818.25 159.27 L817.5 158.9 L816.75 159.29 L816 159.77 L815.25 160.4 L814.5 160.55 L813.75 162.91 L813 162.28 L812.25 164.22 L811.5 162.88 L810.75 164.67 L810 163.79 L809.25 166.37 L808.5 166.35 L807.75 166.53 L807 167.23 L806.25 166.56 L805.5 163.89 L804.75 163.73 L804 165.36 L803.25 165.33 L802.5 163.98 L801.75 161.9 L801 161.28 L800.25 160.18 L799.5 160.36 L798.75 161.06 L798 161.66 L797.25 161.27 L796.5 161.35 L795.75 161.93 L795 160.32 L794.25 160.51 L793.5 160.01 L792.75 159.84 L792 160.15 L791.25 159.52 L790.5 160.24 L789.75 160.43 L789 159.4 L788.25 160.19 L787.5 159.27 L786.75 158.86 L786 159.38 L785.25 159.07 L784.5 159.22 L783.75 159.47 L783 159.12 L782.25 159.3 L781.5 159.08 L780.75 159.31 L780 158.81 L779.25 159.02 L778.5 158.64 L777.75 158.45 L777 158.5 L776.25 158.43 L775.5 158.61 L774.75 158.58 L774 159.13 L773.25 158.42 L772.5 159.07 L771.75 158.79 L771 158.68 L770.25 158.38 L769.5 158.17 L768.75 158.17 L768 157.97 L767.25 158.09 L766.5 157.84 L765.75 157.93 L765 158.02 L764.25 158.05 L763.5 158.27 L762.75 158.52 L762 159.25 L761.25 159.86 L760.5 160.19 L759.75 160.89 L759 160.93 L758.25 161.22 L757.5 160.82 L756.75 162.22 L756 163 L755.25 162.02 L754.5 161.72 L753.75 162.4 L753 162.47 L752.25 161.64 L751.5 161.46 L750.75 162.38 L750 159.84 L749.25 160.13 L748.5 159.13 L747.75 158.91 L747 158.62 L746.25 158.1 L745.5 158.26 L744.75 158.3 L744 158.59 L743.25 158.82 L742.5 159.21 L741.75 159.31 L741 159.28 L740.25 158.3 L739.5 158.17 L738.75 158.02 L738 157.9 L737.25 157.96 L736.5 157.95 L735.75 157.91 L735 157.76 L734.25 157.91 L733.5 157.82 L732.75 157.89 L732 157.93 L731.25 157.83 L730.5 157.91 L729.75 157.93 L729 157.77 L728.25 157.8 L727.5 157.81 L726.75 157.84 L726 157.81Z"/>
<g fill="#dff8e2"><rect x="366.5" y="208.25" width="83.9" height="2.1"/><rect x="455.5" y="208.25" width="84.2" height="2.1"/><rect x="596.6" y="208.25" width="33.1" height="2.1"/><rect x="371.5" y="211.05" width="78.9" height="2.1"/><rect x="540.8" y="211.05" width="88.9" height="2.1"/><rect x="457" y="214.05" width="82.7" height="2.1"/><rect x="548.3" y="214.05" width="42.1" height="2.1"/><rect x="632.5" y="214.05" width="4.2" height="2.1"/><rect x="364.7" y="217.15" width="85.7" height="2.1"/><rect x="461.3" y="217.15" width="78.4" height="2.1"/><rect x="591.6" y="217.15" width="38.1" height="2.1"/><rect x="285.5" y="220.05" width="81" height="2.1"/><rect x="368.2" y="220.05" width="82.2" height="2.1"/><rect x="551" y="220.05" width="85.7" height="2.1"/><rect x="452" y="223.35" width="87.7" height="2.1"/><rect x="544" y="223.35" width="46.4" height="2.1"/><rect x="458.8" y="226.05" width="80.9" height="2.1"/><rect x="284.5" y="229.55" width="74.5" height="2.1"/><rect x="360.2" y="229.55" width="90.2" height="2.1"/><rect x="546.5" y="229.55" width="46.4" height="2.1"/><rect x="594.6" y="229.55" width="42.1" height="2.1"/><rect x="286.8" y="232.35" width="72.2" height="2.1"/><rect x="461.8" y="232.35" width="77.9" height="2.1"/><rect x="549.5" y="232.35" width="40.9" height="2.1"/></g>
<g fill="#dff8e2" opacity="0.55"><rect x="720.8" y="208.25" width="83.9" height="2.1"/><rect x="809.8" y="208.25" width="61.2" height="2.1"/><rect x="725.8" y="211.05" width="78.9" height="2.1"/><rect x="811.3" y="214.05" width="59.7" height="2.1"/><rect x="719" y="217.15" width="85.7" height="2.1"/><rect x="815.6" y="217.15" width="55.4" height="2.1"/><rect x="639.8" y="220.05" width="81" height="2.1"/><rect x="722.5" y="220.05" width="82.2" height="2.1"/><rect x="806.3" y="223.35" width="64.7" height="2.1"/><rect x="813.1" y="226.05" width="57.9" height="2.1"/><rect x="638.8" y="229.55" width="74.5" height="2.1"/><rect x="714.5" y="229.55" width="90.2" height="2.1"/><rect x="641.1" y="232.35" width="72.2" height="2.1"/><rect x="816.1" y="232.35" width="54.9" height="2.1"/></g>
<g fill="#33e45f"><rect x="330.1" y="271.6" width="16.8" height="2"/><rect x="417.1" y="271.6" width="12.5" height="2"/><rect x="504.4" y="271.6" width="13.3" height="2"/><rect x="527.2" y="271.6" width="12.5" height="2"/><rect x="594.6" y="271.6" width="11.3" height="2"/><rect x="615.4" y="271.6" width="12.5" height="2"/><rect x="685.1" y="271.6" width="17.6" height="2"/><rect x="747.8" y="271.6" width="19.3" height="2"/><rect x="371.5" y="274.6" width="23" height="2"/><rect x="460.5" y="274.6" width="19.8" height="2"/><rect x="550.2" y="274.6" width="20.1" height="2"/><rect x="638" y="274.6" width="8.5" height="2"/><rect x="815.5" y="274.6" width="23" height="2"/><rect x="857.3" y="274.6" width="13.7" height="2"/><rect x="704.4" y="277.6" width="10.8" height="2"/><rect x="348.4" y="280.8" width="6.3" height="2"/><rect x="362.2" y="280.8" width="8.5" height="2"/><rect x="445.9" y="280.8" width="4.5" height="2"/><rect x="457.3" y="280.8" width="2" height="2"/><rect x="519.4" y="280.8" width="9.5" height="2"/><rect x="543.5" y="280.8" width="7.5" height="2"/><rect x="608.4" y="280.8" width="8.8" height="2"/><rect x="633.4" y="280.8" width="4.6" height="2"/><rect x="770.3" y="280.8" width="10.6" height="2"/><rect x="835.5" y="280.8" width="4.5" height="2"/><rect x="851" y="280.8" width="2.8" height="2"/><rect x="717.7" y="283.9" width="5" height="2"/><rect x="357" y="287.1" width="4" height="2"/><rect x="436.7" y="287.1" width="5.5" height="2"/><rect x="451.2" y="287.1" width="2.2" height="2"/><rect x="653.6" y="287.1" width="7.2" height="2"/><rect x="783.6" y="287.1" width="7.3" height="2"/><rect x="304.6" y="293.1" width="24.5" height="2"/><rect x="393.5" y="293.1" width="22.4" height="2"/><rect x="482.5" y="293.1" width="20.3" height="2"/><rect x="571.5" y="293.1" width="21.8" height="2"/><rect x="661.3" y="293.1" width="22.2" height="2"/><rect x="724.7" y="293.1" width="21.8" height="2"/><rect x="790.4" y="296.1" width="20.5" height="2"/></g>
<g fill="#33e45f"><rect x="228.8" y="335.1" width="1.8" height="2"/><rect x="239.6" y="335.1" width="1.8" height="2"/><rect x="231.9" y="341.1" width="2.5" height="2"/><rect x="210.6" y="344.1" width="1.4" height="2"/><rect x="233.1" y="344.1" width="5.8" height="2"/><rect x="225.8" y="350.4" width="2.3" height="2"/><rect x="231.9" y="353.4" width="5" height="2"/><rect x="235.1" y="359.4" width="3.8" height="2"/></g>
<g fill="#33e45f"><rect x="404.6" y="335.1" width="23.2" height="2"/><rect x="460.9" y="335.1" width="1.5" height="2"/><rect x="470.9" y="335.1" width="1.8" height="2"/><rect x="589.7" y="335.1" width="1.8" height="2"/><rect x="596.2" y="335.1" width="1.8" height="2"/><rect x="372.2" y="338.1" width="7.5" height="2"/><rect x="415.6" y="338.1" width="28.8" height="2"/><rect x="541.1" y="338.1" width="2.3" height="2"/><rect x="462.2" y="341.1" width="4.2" height="2"/><rect x="546.6" y="341.1" width="3.8" height="2"/><rect x="591.2" y="341.1" width="2.3" height="2"/><rect x="633.1" y="341.1" width="1.7" height="2"/><rect x="380.5" y="344.1" width="10.8" height="2"/><rect x="441.9" y="344.1" width="2.5" height="2"/><rect x="464.4" y="344.1" width="6.5" height="2"/><rect x="586" y="344.1" width="1.5" height="2"/><rect x="593" y="344.1" width="3.7" height="2"/><rect x="404.6" y="347.1" width="9.7" height="2"/><rect x="549.9" y="347.1" width="2.2" height="2"/><rect x="634.3" y="347.1" width="2.5" height="2"/><rect x="458.1" y="350.4" width="2.1" height="2"/><rect x="544.6" y="350.4" width="1.5" height="2"/><rect x="552.9" y="350.4" width="1.5" height="2"/><rect x="587.5" y="350.4" width="1.5" height="2"/><rect x="629.3" y="350.4" width="1.5" height="2"/><rect x="404.6" y="353.4" width="39.8" height="2"/><rect x="462.7" y="353.4" width="5.7" height="2"/><rect x="591" y="353.4" width="3.2" height="2"/><rect x="635.6" y="353.4" width="1.4" height="2"/><rect x="392.3" y="356.4" width="11.2" height="2"/><rect x="546.6" y="356.4" width="2.5" height="2"/><rect x="631.8" y="356.4" width="1.8" height="2"/><rect x="466.9" y="359.4" width="3.3" height="2"/><rect x="539.6" y="359.4" width="1.3" height="2"/><rect x="547.9" y="359.4" width="5" height="2"/><rect x="594.2" y="359.4" width="2.5" height="2"/><rect x="635.1" y="359.4" width="1.7" height="2"/></g>
<g fill="#33e45f"><rect x="757.3" y="335.1" width="23.6" height="2"/><rect x="650.8" y="338.1" width="12.3" height="2"/><rect x="725.2" y="338.1" width="7.5" height="2"/><rect x="768.6" y="338.1" width="22.3" height="2"/><rect x="640" y="341.1" width="3.3" height="2"/><rect x="733.5" y="344.1" width="11" height="2"/><rect x="644.3" y="347.1" width="14.5" height="2"/><rect x="757.3" y="347.1" width="9.8" height="2"/><rect x="655" y="350.4" width="8.1" height="2"/><rect x="757.3" y="353.4" width="33.6" height="2"/><rect x="644.3" y="356.4" width="2.5" height="2"/><rect x="745.3" y="356.4" width="11.3" height="2"/><rect x="644.3" y="359.4" width="9.5" height="2"/></g>
<g fill="#33e45f"><rect x="814" y="335.1" width="1.5" height="2"/><rect x="824.7" y="335.1" width="1.8" height="2"/><rect x="816.7" y="341.1" width="2.5" height="2"/><rect x="795.4" y="344.1" width="1.5" height="2"/><rect x="818" y="344.1" width="5.7" height="2"/><rect x="810.9" y="350.4" width="2.3" height="2"/><rect x="816.7" y="353.4" width="5" height="2"/><rect x="820" y="359.4" width="3.7" height="2"/></g>
<rect x="196" y="410.6" width="76.7" height="0.7" fill="#c9b455" opacity="0.5"/>
<rect x="284.5" y="410.6" width="586.5" height="0.7" fill="#c9b455" opacity="0.5"/>
<path fill="#f2da86" d="M196 405.4L200.6 410.9L196 418.7ZM205.5 404.4L209.6 410.9L205.5 416.1ZM211.3 404.4L215.2 410.9L211.3 415.1ZM216.8 406.3L222.2 410.9L216.8 419.1ZM222.6 407.7L226.4 410.9L222.6 416.1ZM227.6 406.3L231.4 410.9L227.6 419.1ZM232.1 407.5L236.5 410.9L232.1 415.1ZM238.9 405.3L243.5 410.9L238.9 416.1ZM244.6 405.3L249 410.9L244.6 416.1ZM250.2 405.3L255.8 410.9L250.2 420.3ZM261.4 404.3L266 410.9L261.4 416.1ZM284.5 404.3L289.6 410.9L284.5 419.3ZM305.3 402.7L309.6 410.9L305.3 416.1ZM316.1 404.3L322.2 410.9L316.1 419.3ZM338.4 404.3L344.2 410.9L338.4 419.3ZM349.9 402.7L354.3 410.9L349.9 416.1ZM372.2 404.3L378.1 410.9L372.2 419.3ZM393.5 402.7L397.6 410.9L393.5 416.1ZM405 404.3L410.6 410.9L405 419.3ZM427 404.3L433.1 410.9L427 419.3ZM437.6 402.7L441.4 410.9L437.6 416.1ZM448.8 406.5L454 410.9L448.8 417.9ZM460.1 404.3L465.7 410.9L460.1 419.3ZM481.9 402.7L486 410.9L481.9 416.1ZM492.7 404.3L498.6 410.9L492.7 419.3ZM515.3 404.3L520.9 410.9L515.3 419.3ZM525.8 402.7L529.6 410.9L525.8 416.1ZM547.8 404.3L553.7 410.9L547.8 419.3ZM570.4 402.7L574.3 410.9L570.4 416.1ZM581.2 404.3L586.8 410.9L581.2 419.3ZM603 404.3L608.4 410.9L603 419.3ZM608 407.9L612.6 410.9L608 414.5ZM614.3 407.9L619.4 410.9L614.3 414.5ZM619.3 405.3L623.9 410.9L619.3 415.9ZM625 405.3L629.4 410.9L625 415.9ZM636.8 403.7L642.5 410.9L636.8 420.3ZM658.3 402.7L662.1 410.9L658.3 416.1ZM669.6 404.3L675.2 410.9L669.6 419.3ZM691.4 404.3L697 410.9L691.4 419.3ZM702.7 402.7L706.5 410.9L702.7 416.1ZM713.2 406.5L718.6 410.9L713.2 417.9ZM725.2 404.3L730.8 410.9L725.2 417.9ZM746.5 402.7L750.4 410.9L746.5 416.1ZM757.8 404.3L763.7 410.9L757.8 419.3ZM780.4 404.3L786 410.9L780.4 419.3ZM790.9 402.7L794.7 410.9L790.9 416.1ZM813.4 404.3L819.3 410.9L813.4 419.3ZM834.7 402.7L838.9 410.9L834.7 416.1ZM846.3 404.3L851.9 410.9L846.3 419.3ZM868.1 404.3L873.5 410.9L868.1 419.3ZM294 409.9L296 410.9L294 411.9ZM328.3 409.9L330.3 410.9L328.3 411.9ZM361.2 409.9L363.2 410.9L361.2 411.9ZM383.7 409.9L385.7 410.9L383.7 411.9ZM416.6 409.9L418.6 410.9L416.6 411.9ZM471.4 409.9L473.4 410.9L471.4 411.9ZM504.7 409.9L506.7 410.9L504.7 411.9ZM538.3 409.9L540.3 410.9L538.3 411.9ZM560.4 409.9L562.4 410.9L560.4 411.9ZM593.7 409.9L595.7 410.9L593.7 411.9ZM648 409.9L650 410.9L648 411.9ZM681.4 409.9L683.4 410.9L681.4 411.9ZM736.5 409.9L738.5 410.9L736.5 411.9ZM769.6 409.9L771.6 410.9L769.6 411.9ZM803.4 409.9L805.4 410.9L803.4 411.9ZM825 409.9L827 410.9L825 411.9ZM858.8 409.9L860.8 410.9L858.8 411.9Z"/>
<g fill="#33e45f"><rect x="381" y="462.3" width="3.5" height="2"/><rect x="460.3" y="462.3" width="11.4" height="2"/><rect x="284.5" y="468.3" width="23.8" height="2"/><rect x="472.8" y="468.3" width="22.8" height="2"/><rect x="524.7" y="468.3" width="15.5" height="2"/><rect x="570.8" y="468.3" width="56.4" height="2"/><rect x="309.3" y="474.4" width="17.6" height="2"/><rect x="403.6" y="474.4" width="47.3" height="2"/><rect x="548.2" y="477.6" width="11.6" height="2"/><rect x="632.4" y="477.6" width="1.6" height="2"/><rect x="496.3" y="480.4" width="27.6" height="2"/><rect x="369.7" y="483.6" width="4.8" height="2"/><rect x="560.8" y="483.6" width="9" height="2"/><rect x="627.9" y="483.6" width="4.1" height="2"/><rect x="328.1" y="486.6" width="27.1" height="2"/></g>
<g fill="#33e45f" opacity="0.55"><rect x="736" y="462.3" width="3" height="2"/><rect x="815" y="462.3" width="11.2" height="2"/><rect x="638.8" y="468.3" width="24.2" height="2"/><rect x="827.2" y="468.3" width="22.8" height="2"/><rect x="663.8" y="474.4" width="17.6" height="2"/><rect x="758.3" y="474.4" width="47.7" height="2"/><rect x="851" y="480.4" width="20" height="2"/><rect x="724.5" y="483.6" width="4.5" height="2"/><rect x="682" y="486.6" width="27.7" height="2"/></g>
<path fill="#0e0f0f" d="M636 187.1L639 187.1L637.5 188.9Z M636 245.1L639 245.1L637.5 243.3Z"/>
<path fill="#0e0f0f" d="M636 250.9L639 250.9L637.5 252.7Z M636 308.1L639 308.1L637.5 306.3Z"/>
<path fill="#0e0f0f" d="M636 377.6L639 377.6L637.5 379.4Z M636 435L639 435L637.5 433.2Z"/>
<path fill="#0e0f0f" d="M636 441.7L639 441.7L637.5 443.5Z M636 498.9L639 498.9L637.5 497.1Z"/>
</g>
<rect x="231.8" y="119" width="1.1" height="382.7" fill="#e2e2e2"/>
<path d="M222.3 100.6 H242.3 V110.6 L232.3 120.2 L222.3 110.6 Z" fill="#4b4b4c" stroke="#e4e4e4" stroke-width="1" stroke-linejoin="round"/>
</svg>
</div></div>
</body></html>
